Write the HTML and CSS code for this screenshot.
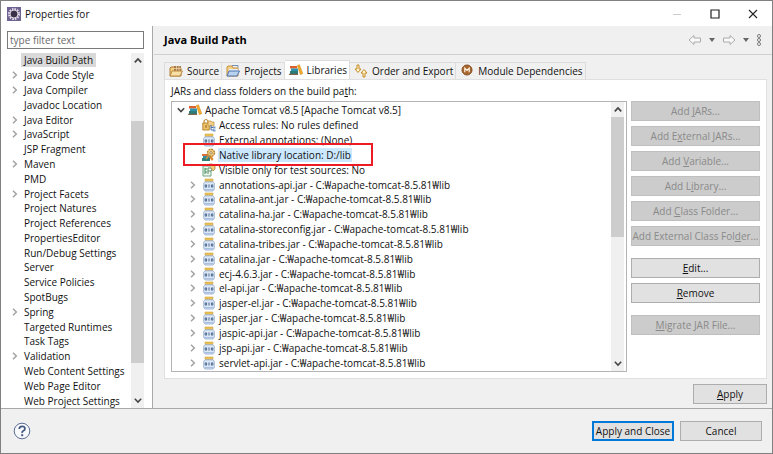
FILE: index.html
```html
<!DOCTYPE html>
<html lang="en">
<head>
<meta charset="utf-8">
<title>Properties for</title>
<link rel="stylesheet" href="styles.css">
</head>
<body>
<svg class="defs" aria-hidden="true">
  <symbol id="right" viewBox="0 0 8 8"><path d="M2 .8 5.3 4 2 7.2" fill="none" stroke="#a3a3a3" stroke-width="1.5"/></symbol>
  <symbol id="down" viewBox="0 0 8 8"><path d="M.8 2.200 4 5.600l3.200-3.400" fill="none" stroke="#444" stroke-width="1.5"/></symbol>
  <symbol id="up" viewBox="0 0 8 8"><path d="M.8 5.800 4 2.400l3.200 3.400" fill="none" stroke="#444" stroke-width="1.7"/></symbol>
  <symbol id="books" viewBox="0 0 14 14">
    <path d="M1 3h7v2.500H1z" fill="#e0602c"/><path d="M2 5.500h7V8H2z" fill="#2f93ad"/><path d="M1 8h8v3.500H1z" fill="#2e7c78"/><path d="M0 11.300h9" stroke="#7c512c"/><path d="m8.300 2.500 2.200-.8 3.300 9-2.500.9z" fill="#f0ab2b" stroke="#d38918" stroke-width=".5"/>
  </symbol>
  <symbol id="jar" viewBox="0 0 14 14">
    <path d="M3 1h8v2.500H3z" fill="#e9bf52" stroke="#d0a848" stroke-width=".6"/>
    <path d="M3 3.800h8l1.300 1.500v6L11 13H3l-1.300-1.700v-6z" fill="#dce8f7" stroke="#8fa6c8" stroke-width=".8"/>
    <path d="M2.500 11.700h9" stroke="#9eb7da"/>
    <path d="M3.200 6.900h1.400v2.200H3.200zM7 6.400v3.200M9.400 6.900h1.400v2.200H9.400z" fill="none" stroke="#3f5d86" stroke-width=".9"/>
  </symbol>
  <symbol id="access" viewBox="0 0 14 14">
    <path d="M2 5V3q2-3 4 0v2" fill="none" stroke="#bd8d35" stroke-width="1.200"/><path d="M.8 5h6.500v7H.8z" fill="#edc468" stroke="#b78639"/><path d="M4 7v3" stroke="#8b642a"/><path d="M6 3h3l1 1h2v4H6z" fill="#f1d189" stroke="#bb8b3e" stroke-width=".7"/><path d="M9 7v5h3M9 9.500h3" fill="none" stroke="#496da5"/><path d="M11 8.500h2.500v2H11zM11 11.500h2.500v2H11z" fill="#7599cc"/>
  </symbol>
  <symbol id="native" viewBox="0 0 14 14">
    <path d="M0 6h6v2H0z" fill="#d97338"/><path d="M1 8h7v2H1z" fill="#318da6"/><path d="M0 10h8v3H0z" fill="#327f76"/><path d="m7 9 3 4 1.500-2-2-3" fill="#dd8b2c"/><circle cx="9" cy="4.800" r="3.500" fill="#f4d58a" stroke="#b98534" stroke-width="1.500" stroke-dasharray="2 .7"/><circle cx="9" cy="4.800" r="1.200" fill="#fff" stroke="#a5803e"/><path d="m7 7-3 4" stroke="#c39546" stroke-width="1.500"/>
  </symbol>
  <symbol id="visible" viewBox="0 0 14 14">
    <path d="M1 3h8v10H1z" fill="#edf6ee" stroke="#70a481"/><path d="M3 5v6M5 6H3M5 9H3" stroke="#3e8b5a"/><path d="M6 11V5h3q2 2 0 3H6" fill="#fff" stroke="#5b8b69"/><path d="M7 1h3l3 2v3l-2 2-2-3" fill="#edcd7a" stroke="#b58639" stroke-width=".8"/>
  </symbol>
  <symbol id="source" viewBox="0 0 14 14">
    <path d="M1 12V4l1-1h3l1 1h6v8z" fill="#f3cf80" stroke="#b07b35"/><path d="M5 2h7v5H5z" fill="#a9794a"/><path d="M5 4.500h7M7.500 2v5M10 2v5" stroke="#f4dfb3" stroke-width=".7"/><path d="m1 12 2-5h10.500L11 12z" fill="#f9dfa4" stroke="#b98b43"/>
  </symbol>
  <symbol id="projects" viewBox="0 0 14 14">
    <path d="M1 12V3l1-1h4l1 2h5v8z" fill="#f4d086" stroke="#c58e3d"/><path d="M3 5h9v3H3z" fill="#e4edf9"/><path d="m1 12 2-5h10.500L11 12z" fill="#b9d2ef" stroke="#4e76ac"/><path d="M6 1.500h6v2" fill="none" stroke="#718fb7"/>
  </symbol>
  <symbol id="order" viewBox="0 0 14 14">
    <path d="M3 8.500V4.500H1L4 1l3 3.500H5v4z" fill="#fff3d0" stroke="#c58d25" transform="rotate(180 4 4.750)"/><path d="M9 13h2V9h2l-3-3.500L7 9h2z" fill="#fff3d0" stroke="#c58d25"/>
  </symbol>
  <symbol id="module" viewBox="0 0 14 14">
    <circle cx="7" cy="6" r="5" fill="#a8682f" stroke="#87501f"/><path d="M4.800 8.300v-4L7 6.500l2.200-2.200v4" fill="none" stroke="#fff2df" stroke-width="1.200"/>
  </symbol>
  <symbol id="arrow" viewBox="0 0 14 12"><path d="M1 6 6 1.500V4h6.500v4H6v2.500z" fill="#f9f9f9" stroke="#aaa"/></symbol>
</svg>

<header class="titlebar">
  <svg class="app" viewBox="0 0 14 14"><path d="M0 0h14v14H0z" fill="#6f6391"/><circle cx="7" cy="7" r="5" fill="#35294f" stroke="#e4deed" stroke-width="2" stroke-dasharray="1.600 1"/><circle cx="7" cy="7" r="4" fill="#3a3048" stroke="#eee9f3" stroke-width=".9"/></svg>
  <h1>Properties for</h1>
  <button class="caption" aria-label="Minimize"><svg viewBox="0 0 10 10"><path d="M1 5.500h8" stroke="#ccc"/></svg></button>
  <button class="caption" aria-label="Maximize"><svg viewBox="0 0 10 10"><path d="M1 1h8v8H1z" fill="none" stroke="#222" stroke-width="1.200"/></svg></button>
  <button class="caption" aria-label="Close"><svg viewBox="0 0 10 10"><path d="m1 1 8 8m0-8L1 9" stroke="#222" stroke-width="1.100"/></svg></button>
</header>

<div class="body">
  <nav class="side">
    <input class="filter" type="text" placeholder="type filter text" aria-label="Filter">
    <div class="scroller">
      <ul class="rows nav">
        <li><a href="#" class="current">Java Build Path</a></li>
        <li><svg class="twist"><use href="#right"/></svg><a href="#">Java Code Style</a></li>
        <li><svg class="twist"><use href="#right"/></svg><a href="#">Java Compiler</a></li>
        <li><a href="#">Javadoc Location</a></li>
        <li><svg class="twist"><use href="#right"/></svg><a href="#">Java Editor</a></li>
        <li><svg class="twist"><use href="#right"/></svg><a href="#">JavaScript</a></li>
        <li><a href="#">JSP Fragment</a></li>
        <li><svg class="twist"><use href="#right"/></svg><a href="#">Maven</a></li>
        <li><a href="#">PMD</a></li>
        <li><svg class="twist"><use href="#right"/></svg><a href="#">Project Facets</a></li>
        <li><a href="#">Project Natures</a></li>
        <li><a href="#">Project References</a></li>
        <li><a href="#">PropertiesEditor</a></li>
        <li><a href="#">Run/Debug Settings</a></li>
        <li><a href="#">Server</a></li>
        <li><a href="#">Service Policies</a></li>
        <li><a href="#">SpotBugs</a></li>
        <li><svg class="twist"><use href="#right"/></svg><a href="#">Spring</a></li>
        <li><a href="#">Targeted Runtimes</a></li>
        <li><a href="#">Task Tags</a></li>
        <li><svg class="twist"><use href="#right"/></svg><a href="#">Validation</a></li>
        <li><a href="#">Web Content Settings</a></li>
        <li><a href="#">Web Page Editor</a></li>
        <li><a href="#">Web Project Settings</a></li>
      </ul>
      <div class="bar side-bar"><svg><use href="#up"/></svg><div class="track"><div class="thumb"></div></div><svg><use href="#down"/></svg></div>
    </div>
  </nav>

  <main class="page">
    <div class="heading">
      <h2>Java Build Path</h2>
      <button class="tool" aria-label="Back"><svg class="arrow"><use href="#arrow"/></svg></button>
      <button class="tool" aria-label="Back history"><svg class="caret" viewBox="0 0 6 4"><path d="M0 0h6L3 4z" fill="#666"/></svg></button>
      <button class="tool" aria-label="Forward"><svg class="arrow forward"><use href="#arrow"/></svg></button>
      <button class="tool" aria-label="Forward history"><svg class="caret" viewBox="0 0 6 4"><path d="M0 0h6L3 4z" fill="#666"/></svg></button>
      <button class="tool" aria-label="Menu"><svg class="dots" viewBox="0 0 6 14"><g fill="#fff" stroke="#777"><circle cx="3" cy="3" r="1.500"/><circle cx="3" cy="7" r="1.500"/><circle cx="3" cy="11" r="1.500"/></g></svg></button>
    </div>
    <div class="content">
      <div class="tabs" role="tablist">
        <button role="tab"><svg class="icon"><use href="#source"/></svg>Source</button>
        <button role="tab"><svg class="icon"><use href="#projects"/></svg>Projects</button>
        <button role="tab" aria-selected="true"><svg class="icon"><use href="#books"/></svg>Libraries</button>
        <button role="tab"><svg class="icon"><use href="#order"/></svg>Order and Export</button>
        <button role="tab"><svg class="icon"><use href="#module"/></svg>Module Dependencies</button>
      </div>
      <section class="panel">
        <p class="caption-text">JARs and class folders on the build pa<u>t</u>h:</p>
        <div class="columns">
          <div class="scroller tree">
            <ul class="rows">
              <li class="root"><svg class="twist"><use href="#down"/></svg><svg class="icon"><use href="#books"/></svg><span>Apache Tomcat v8.5 [Apache Tomcat v8.5]</span></li>
              <li><svg class="icon"><use href="#access"/></svg><span>Access rules: No rules defined</span></li>
              <li><svg class="icon"><use href="#jar"/></svg><span>External annotations: (None)</span></li>
              <li class="marked"><svg class="icon"><use href="#native"/></svg><span>Native library location: D:/lib</span></li>
              <li><svg class="icon"><use href="#visible"/></svg><span>Visible only for test sources: No</span></li>
              <li><svg class="twist"><use href="#right"/></svg><svg class="icon"><use href="#jar"/></svg><span>annotations-api.jar - C:₩apache-tomcat-8.5.81₩lib</span></li>
              <li><svg class="twist"><use href="#right"/></svg><svg class="icon"><use href="#jar"/></svg><span>catalina-ant.jar - C:₩apache-tomcat-8.5.81₩lib</span></li>
              <li><svg class="twist"><use href="#right"/></svg><svg class="icon"><use href="#jar"/></svg><span>catalina-ha.jar - C:₩apache-tomcat-8.5.81₩lib</span></li>
              <li><svg class="twist"><use href="#right"/></svg><svg class="icon"><use href="#jar"/></svg><span>catalina-storeconfig.jar - C:₩apache-tomcat-8.5.81₩lib</span></li>
              <li><svg class="twist"><use href="#right"/></svg><svg class="icon"><use href="#jar"/></svg><span>catalina-tribes.jar - C:₩apache-tomcat-8.5.81₩lib</span></li>
              <li><svg class="twist"><use href="#right"/></svg><svg class="icon"><use href="#jar"/></svg><span>catalina.jar - C:₩apache-tomcat-8.5.81₩lib</span></li>
              <li><svg class="twist"><use href="#right"/></svg><svg class="icon"><use href="#jar"/></svg><span>ecj-4.6.3.jar - C:₩apache-tomcat-8.5.81₩lib</span></li>
              <li><svg class="twist"><use href="#right"/></svg><svg class="icon"><use href="#jar"/></svg><span>el-api.jar - C:₩apache-tomcat-8.5.81₩lib</span></li>
              <li><svg class="twist"><use href="#right"/></svg><svg class="icon"><use href="#jar"/></svg><span>jasper-el.jar - C:₩apache-tomcat-8.5.81₩lib</span></li>
              <li><svg class="twist"><use href="#right"/></svg><svg class="icon"><use href="#jar"/></svg><span>jasper.jar - C:₩apache-tomcat-8.5.81₩lib</span></li>
              <li><svg class="twist"><use href="#right"/></svg><svg class="icon"><use href="#jar"/></svg><span>jaspic-api.jar - C:₩apache-tomcat-8.5.81₩lib</span></li>
              <li><svg class="twist"><use href="#right"/></svg><svg class="icon"><use href="#jar"/></svg><span>jsp-api.jar - C:₩apache-tomcat-8.5.81₩lib</span></li>
              <li><svg class="twist"><use href="#right"/></svg><svg class="icon"><use href="#jar"/></svg><span>servlet-api.jar - C:₩apache-tomcat-8.5.81₩lib</span></li>
            </ul>
            <div class="bar tree-bar"><svg><use href="#up"/></svg><div class="track"><div class="thumb"></div></div><svg><use href="#down"/></svg></div>
          </div>
          <div class="actions">
            <div class="group">
              <button class="btn" disabled>Add <u>J</u>ARs...</button>
              <button class="btn" disabled>Add E<u>x</u>ternal JARs...</button>
              <button class="btn" disabled>Add <u>V</u>ariable...</button>
              <button class="btn" disabled>Add L<u>i</u>brary...</button>
              <button class="btn" disabled>Add <u>C</u>lass Folder...</button>
              <button class="btn" disabled>Add External Class Fol<u>d</u>er...</button>
            </div>
            <div class="group">
              <button class="btn"><u>E</u>dit...</button>
              <button class="btn"><u>R</u>emove</button>
            </div>
            <div class="group">
              <button class="btn" disabled><u>M</u>igrate JAR File...</button>
            </div>
          </div>
        </div>
      </section>
      <div class="apply"><button class="btn"><u>A</u>pply</button></div>
    </div>
  </main>
</div>

<footer class="footer">
  <button class="help" aria-label="Help"><svg viewBox="0 0 18 18"><circle cx="9" cy="9" r="7.800" fill="#f8fafd" stroke="#5b6d92"/><path d="M6.300 7q0-2.700 2.800-2.700T11.900 6.800q0 1.300-1.500 2T9.200 11" fill="none" stroke="#44597f" stroke-width="1.800"/><path d="M8.200 12.200h2v2h-2z" fill="#44597f"/></svg></button>
  <button class="btn primary">Apply and Close</button>
  <button class="btn">Cancel</button>
</footer>
</body>
</html>
```
FILE: styles.css
```css
*, *::before, *::after { box-sizing: border-box; }

body {
  margin: 0;
  height: 100vh;
  display: flex;
  flex-direction: column;
  border: 1px solid #808080;
  background: #f0f0f0;
  color: #111;
  font: 10px/14px "Open Sans", "Noto Sans", "Noto Sans CJK KR", sans-serif;
  white-space: nowrap;
}

h1, h2, p, ul { margin: 0; padding: 0; font: inherit; }
ul { list-style: none; }
a { color: inherit; text-decoration: none; }
svg { display: block; flex: none; }
u { text-underline-offset: 1px; }
button { font: inherit; color: inherit; padding: 0; border: 0; background: none; }

.defs { position: absolute; width: 0; height: 0; }

.titlebar { display: flex; align-items: center; height: 25px; background: #fff; }
.app { width: 14px; height: 14px; margin: 0 4px 0 6px; }
.titlebar h1 { flex: 1; }
.caption { width: 38px; height: 24px; display: grid; place-items: center; }
.caption svg { width: 10px; height: 10px; }

.body { flex: 1; display: flex; min-height: 0; border-bottom: 1px solid #a8a8a8; }

.side {
  flex: 0 0 152px;
  display: flex;
  flex-direction: column;
  gap: 4px;
  padding: 5px 8px 0 6px;
  background: #fff;
  border-right: 1px solid #a8a8a8;
}
.filter {
  width: 100%;
  height: 18px;
  padding: 0 2px;
  border: 1px solid #7a7a7a;
  font: inherit;
}
.filter::placeholder { color: #6a6a6a; opacity: 1; }

.scroller { flex: 1; display: flex; min-height: 0; min-width: 0; }
.rows { flex: 1; min-width: 0; display: grid; grid-auto-rows: minmax(0, 1fr); }
.rows li { display: flex; align-items: center; min-width: 0; }
.twist { width: 8px; height: 8px; }
.icon { width: 14px; height: 14px; }

.nav li { position: relative; padding-left: 14px; }
.nav .twist { position: absolute; left: 4px; }
.nav a { padding: 0 3px; }
.nav .current { background: #d9d9d9; }

.bar { flex: 0 0 13px; display: flex; flex-direction: column; align-items: center; background: #f0f0f0; }
.bar > svg { width: 8px; height: 15px; }
.track { flex: 1; width: 100%; display: flex; flex-direction: column; }
.thumb { background: #cdcdcd; }
.side-bar .track { justify-content: flex-end; padding-bottom: 30px; }
.side-bar .thumb { height: 82%; }
.tree-bar .thumb { height: 50%; }

.page { flex: 1; min-width: 0; display: flex; flex-direction: column; margin-left: 1px; }
.heading {
  display: flex;
  align-items: center;
  gap: 7px;
  height: 29px;
  padding: 0 10px;
  border-bottom: 1px solid #cfcfd2;
}
.heading h2 { flex: 1; font-size: 11px; font-weight: 700; color: #000; }
.arrow { width: 14px; height: 12px; }
.forward { transform: scaleX(-1); }
.caret { width: 6px; height: 4px; }
.dots { width: 6px; height: 14px; }

.content { flex: 1; display: flex; flex-direction: column; min-height: 0; padding: 5px 5px 4px 10px; }
.tabs { display: flex; align-items: flex-end; height: 19px; }
.tabs button {
  display: flex;
  align-items: center;
  gap: 4px;
  height: 17px;
  padding: 0 2px 0 4px;
  border: 1px solid #dcdcdc;
  border-width: 1px 1px 0 0;
}
.tabs button:first-child { border-left-width: 1px; }
.tabs [aria-selected] { height: 19px; background: #fff; }

.panel {
  flex: 1;
  display: flex;
  flex-direction: column;
  min-height: 0;
  padding: 4px 6px 6px;
  background: #fff;
  border: 1px solid #e0e0e0;
}
.caption-text { margin-bottom: 3px; }
.columns { flex: 1; display: flex; gap: 4px; min-height: 0; }
.tree { border: 1px solid #b4b4b8; padding-right: 2px; }
.tree .rows { padding: 1px 0; }
.tree li { padding-left: 30px; gap: 2px; }
.tree li .twist { margin: 0 3px 0 -13px; }
.tree li.root { padding-left: 5px; }
.tree li.root .twist { margin: 0 1px 0 0; }
.tree span { padding: 0 1px; }
.marked { position: relative; }
.marked span { background: #cce8ff; }
.marked::after {
  content: "";
  position: absolute;
  inset: -4px auto -4px 11px;
  width: 190px;
  border: 2px solid #ed1c24;
}

.actions { flex: 0 0 129px; min-width: 0; display: flex; flex-direction: column; gap: 12px; }
.group { display: flex; flex-direction: column; gap: 5px; }
.btn { height: 20px; border: 1px solid #adadad; background: #e1e1e1; text-align: center; }
.btn:disabled { border-color: #bfbfbf; background: #ccc; color: #8a8a8a; }

.apply { display: flex; justify-content: flex-end; padding-top: 5px; }
.apply .btn { width: 74px; }

.footer { display: flex; align-items: center; gap: 6px; height: 44px; padding: 0 10px 0 12px; }
.help { margin-right: auto; }
.help svg { width: 18px; height: 18px; }
.footer .btn { width: 82px; }
.footer .primary { border: 2px solid #0078d7; }
```
